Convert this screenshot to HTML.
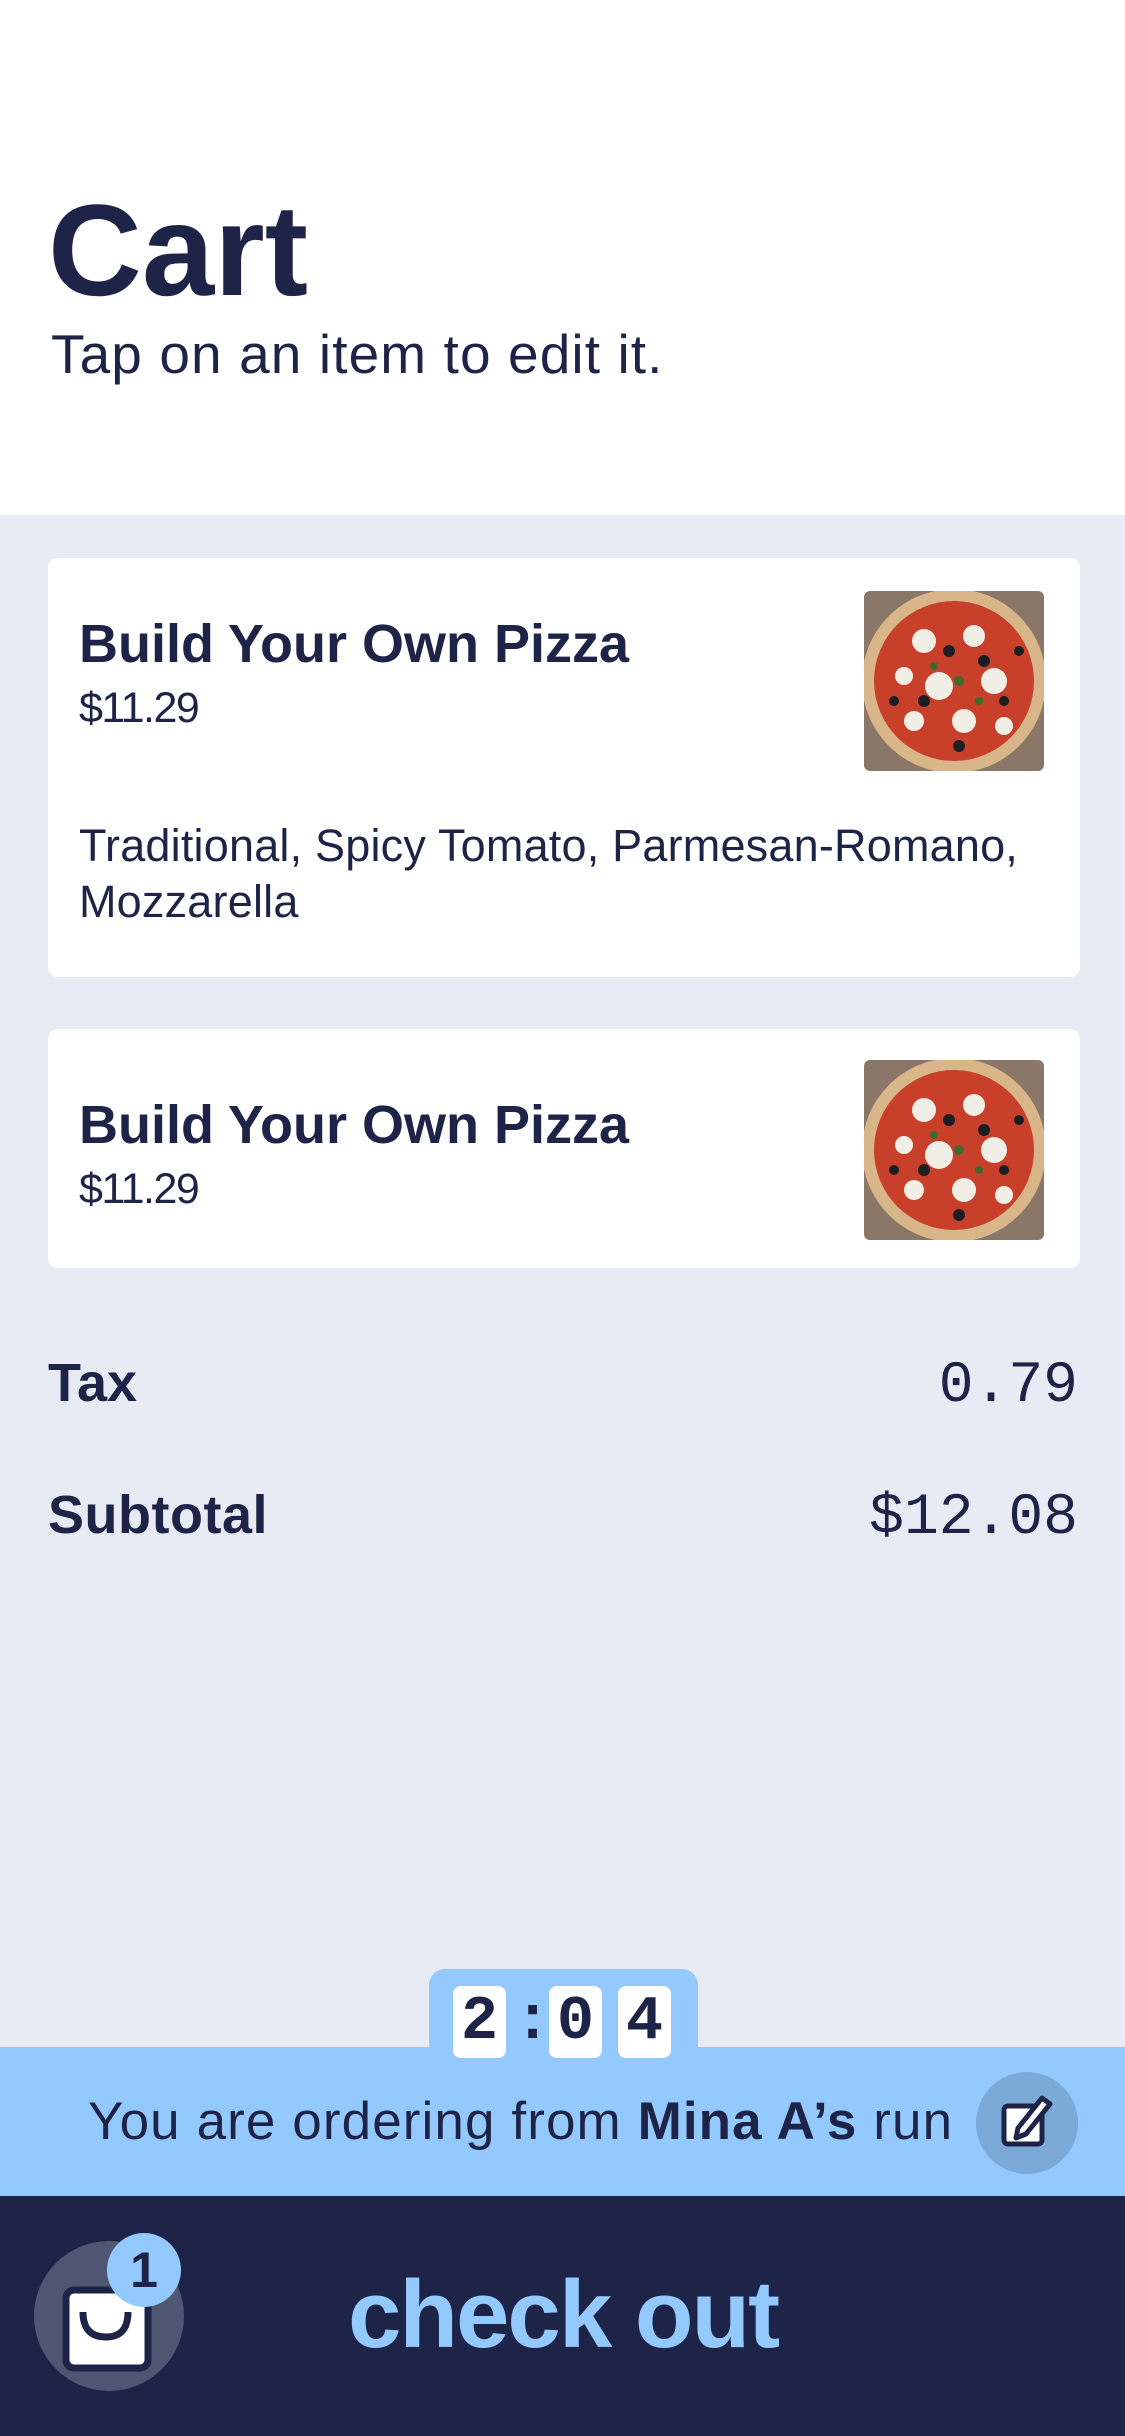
<!DOCTYPE html>
<html><head><meta charset="utf-8"><style>
*{margin:0;padding:0;box-sizing:border-box}
body{width:1125px;height:2436px;background:#e8ebf3;font-family:"Liberation Sans",sans-serif;color:#1e2448;position:relative;overflow:hidden}
.hdr{position:absolute;left:0;top:0;width:1125px;height:515px;background:#fff}
.abs{position:absolute;white-space:nowrap}
.card{position:absolute;left:48px;width:1032px;background:#fff;border-radius:10px}
.t{font-weight:bold;font-size:54px;letter-spacing:0}
.p{font-size:43px;letter-spacing:-1.5px}
.mono{font-family:"Liberation Mono",monospace;font-size:58px}
.digit{position:absolute;top:1986px;width:53px;height:72px;background:#fff;border-radius:8px;font-family:"Liberation Mono",monospace;font-weight:bold;font-size:62px;text-align:center;line-height:72px}
</style></head><body>
<div class="hdr"></div>
<div class="abs" style="left:48px;top:180px;font-size:130px;font-weight:bold;letter-spacing:0;line-height:140px">Cart</div>
<div class="abs" style="left:51px;top:322px;font-size:55px;letter-spacing:1.1px;line-height:64px">Tap on an item to edit it.</div>

<svg width="0" height="0" style="position:absolute"><defs>
<g id="pz">
<rect width="180" height="180" fill="#8a7768"/>
<circle cx="90" cy="90" r="92" fill="#d9b689"/>
<circle cx="90" cy="90" r="80" fill="#c8402a"/>
<g fill="#f1eee6"><circle cx="60" cy="50" r="12"/><circle cx="110" cy="45" r="11"/><circle cx="130" cy="90" r="13"/><circle cx="75" cy="95" r="14"/><circle cx="100" cy="130" r="12"/><circle cx="50" cy="130" r="10"/><circle cx="140" cy="135" r="9"/><circle cx="40" cy="85" r="9"/></g>
<g fill="#1d1d24"><circle cx="85" cy="60" r="6"/><circle cx="120" cy="70" r="6"/><circle cx="60" cy="110" r="6"/><circle cx="140" cy="110" r="5"/><circle cx="95" cy="155" r="6"/><circle cx="30" cy="110" r="5"/><circle cx="155" cy="60" r="5"/></g>
<g fill="#3f6a2d"><circle cx="95" cy="90" r="5"/><circle cx="70" cy="75" r="4"/><circle cx="115" cy="110" r="4"/></g>
</g></defs></svg>

<div class="card" style="top:558px;height:419px">
<div class="abs t" style="left:31px;top:55px">Build Your Own Pizza</div>
<div class="abs p" style="left:31px;top:126px">$11.29</div>
<svg class="abs" style="left:816px;top:33px;border-radius:6px" width="180" height="180"><use href="#pz"/></svg>
<div class="abs" style="left:31px;top:260px;font-size:45px;letter-spacing:0.2px;line-height:56px;white-space:normal;width:1000px">Traditional, Spicy Tomato, Parmesan-Romano,<br>Mozzarella</div>
</div>

<div class="card" style="top:1029px;height:239px">
<div class="abs t" style="left:31px;top:65px">Build Your Own Pizza</div>
<div class="abs p" style="left:31px;top:136px">$11.29</div>
<svg class="abs" style="left:816px;top:31px;border-radius:6px" width="180" height="180"><use href="#pz"/></svg>
</div>

<div class="abs" style="left:48px;top:1352px;font-size:54px;font-weight:bold;letter-spacing:0">Tax</div>
<div class="abs mono" style="right:47px;top:1354px">0.79</div>
<div class="abs" style="left:48px;top:1484px;font-size:54px;font-weight:bold;letter-spacing:0.5px">Subtotal</div>
<div class="abs mono" style="right:47px;top:1486px">$12.08</div>

<div class="abs" style="left:429px;top:1969px;width:269px;height:90px;background:#94c9fd;border-radius:16px 16px 0 0"></div>
<div class="abs" style="left:0;top:2047px;width:1125px;height:150px;background:#94c9fd"></div>
<div class="digit" style="left:453px">2</div>
<div class="abs" style="left:514px;top:1986px;font-family:'Liberation Mono',monospace;font-size:62px;line-height:72px;font-weight:bold">:</div>
<div class="digit" style="left:549px">0</div>
<div class="digit" style="left:618px">4</div>
<div class="abs" style="left:88px;top:2090px;font-size:53px;letter-spacing:1.1px;line-height:64px">You are ordering from <b>Mina A’s</b> run</div>
<div class="abs" style="left:976px;top:2072px;width:102px;height:102px;border-radius:50%;background:#7ba9d8"></div>
<svg class="abs" style="left:996px;top:2092px" width="62" height="62" viewBox="0 0 62 62">
<rect x="8" y="14" width="38" height="38" rx="4" fill="#fff" stroke="#1e2448" stroke-width="5"/>
<path d="M46 6 L54 12 L30 42 L20 46 L22 36 Z" fill="#fff" stroke="#1e2448" stroke-width="5" stroke-linejoin="round"/>
</svg>

<div class="abs" style="left:0;top:2196px;width:1125px;height:240px;background:#1e2448"></div>
<div class="abs" style="left:34px;top:2241px;width:150px;height:150px;border-radius:50%;background:#4f5671"></div>
<svg class="abs" style="left:58px;top:2262px" width="100" height="110" viewBox="0 0 100 110">
<rect x="8" y="28" width="82" height="78" rx="8" fill="#fff" stroke="#1e2448" stroke-width="7"/>
<path d="M25 50 Q25 75 48 75 Q70 75 70 50" fill="none" stroke="#1e2448" stroke-width="7"/>
</svg>
<div class="abs" style="left:107px;top:2233px;width:74px;height:74px;border-radius:50%;background:#94c9fd;text-align:center;line-height:74px;font-size:50px;font-weight:bold">1</div>
<div class="abs" style="left:348px;top:2260px;font-size:96px;font-weight:bold;color:#94c9fd;letter-spacing:-2px;line-height:110px">check out</div>
</body></html>
